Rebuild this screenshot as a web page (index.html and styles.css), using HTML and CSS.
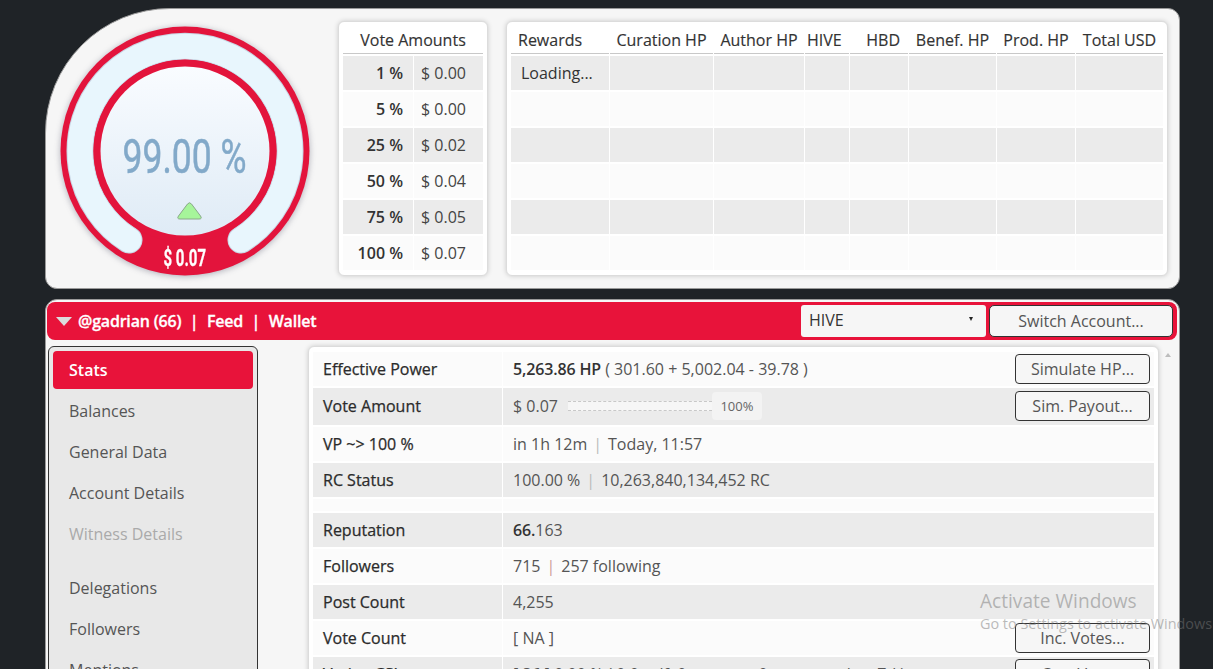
FILE: index.html
```html
<!DOCTYPE html>
<html lang="en">
<head>
<meta charset="utf-8">
<title>Hive Stats</title>
<link rel="stylesheet" href="styles.css">
</head>
<body>
<main class="page">
  <section class="top-panel">
    <svg class="gauge" width="250" height="250" viewBox="0 0 250 250" role="img" aria-label="Voting power gauge">
      <defs>
        <linearGradient id="disk" x1="0" y1="0" x2="0" y2="1">
          <stop offset="0" stop-color="#f9fcff"/>
          <stop offset="1" stop-color="#dfebf6"/>
        </linearGradient>
      </defs>
      <circle class="g-red" cx="125" cy="125" r="124.5"/>
      <path class="g-band-shade" d="M69 214 A105 105 0 1 1 181 214"/>
      <path class="g-band" d="M69 214 A105 105 0 1 1 181 214"/>
      <circle class="g-red" cx="125" cy="125" r="91.5"/>
      <circle class="g-disk" cx="125" cy="125" r="84.5" fill="url(#disk)"/>
      <text class="g-pct" x="62.5" y="147" textLength="124" lengthAdjust="spacingAndGlyphs">99.00 %</text>
      <path class="g-tri" d="M127.5 178 Q129.5 175.5 131.5 178 L140.5 190 Q142.5 193 139 193 L120 193 Q116.5 193 118.5 190 Z"/>
      <text class="g-usd" x="103.5" y="239.5" textLength="42.5" lengthAdjust="spacingAndGlyphs">$ 0.07</text>
    </svg>

    <div class="card vote-card">
      <div class="th vote-head">Vote Amounts</div>
      <div class="td odd strong num">1 %</div><div class="td odd val">$ 0.00</div>
      <div class="td strong num">5 %</div><div class="td val">$ 0.00</div>
      <div class="td odd strong num">25 %</div><div class="td odd val">$ 0.02</div>
      <div class="td strong num">50 %</div><div class="td val">$ 0.04</div>
      <div class="td odd strong num">75 %</div><div class="td odd val">$ 0.05</div>
      <div class="td strong num">100 %</div><div class="td val">$ 0.07</div>
    </div>

    <div class="card rewards-card">
      <div class="th th-first">Rewards</div>
      <div class="th">Curation HP</div>
      <div class="th">Author HP</div>
      <div class="th th-hive">HIVE</div>
      <div class="th th-hbd">HBD</div>
      <div class="th">Benef. HP</div>
      <div class="th">Prod. HP</div>
      <div class="th">Total USD</div>

      <div class="td odd loading">Loading...</div><div class="td odd"></div><div class="td odd"></div><div class="td odd"></div><div class="td odd"></div><div class="td odd"></div><div class="td odd"></div><div class="td odd"></div>
      <div class="td"></div><div class="td"></div><div class="td"></div><div class="td"></div><div class="td"></div><div class="td"></div><div class="td"></div><div class="td"></div>
      <div class="td odd"></div><div class="td odd"></div><div class="td odd"></div><div class="td odd"></div><div class="td odd"></div><div class="td odd"></div><div class="td odd"></div><div class="td odd"></div>
      <div class="td"></div><div class="td"></div><div class="td"></div><div class="td"></div><div class="td"></div><div class="td"></div><div class="td"></div><div class="td"></div>
      <div class="td odd"></div><div class="td odd"></div><div class="td odd"></div><div class="td odd"></div><div class="td odd"></div><div class="td odd"></div><div class="td odd"></div><div class="td odd"></div>
      <div class="td"></div><div class="td"></div><div class="td"></div><div class="td"></div><div class="td"></div><div class="td"></div><div class="td"></div><div class="td"></div>
    </div>
  </section>

  <section class="main-panel">
    <header class="bar">
      <span class="bar-arrow"></span>
      <nav class="bar-links">
        <span>@gadrian (66)</span><span class="sep">|</span><span>Feed</span><span class="sep">|</span><span>Wallet</span>
      </nav>
      <div class="select">HIVE<span class="select-arrow"></span></div>
      <button class="btn btn-switch">Switch Account...</button>
    </header>

    <div class="content">
      <aside class="sidebar">
        <div class="side-item active">Stats</div>
        <div class="side-item">Balances</div>
        <div class="side-item">General Data</div>
        <div class="side-item">Account Details</div>
        <div class="side-item disabled">Witness Details</div>
        <div class="side-item group">Delegations</div>
        <div class="side-item">Followers</div>
        <div class="side-item">Mentions</div>
      </aside>

      <div class="details card">
        <div class="label">Effective Power</div>
        <div class="value"><b>5,263.86 HP</b>&nbsp;( 301.60 + 5,002.04 - 39.78 )<button class="btn btn-row">Simulate HP...</button></div>

        <div class="label odd tall">Vote Amount</div>
        <div class="value odd tall">$ 0.07<span class="meter"></span><span class="meter-label">100%</span><button class="btn btn-row">Sim. Payout...</button></div>

        <div class="label">VP ~&gt; 100 %</div>
        <div class="value">in 1h 12m<span class="pipe">|</span>Today, 11:57</div>

        <div class="label odd">RC Status</div>
        <div class="value odd">100.00 %<span class="pipe">|</span>10,263,840,134,452 RC</div>

        <div class="spacer"></div>
        <div class="spacer"></div>

        <div class="label odd">Reputation</div>
        <div class="value odd"><b>66.</b>163</div>

        <div class="label">Followers</div>
        <div class="value">715<span class="pipe red">|</span>257 following</div>

        <div class="label odd">Post Count</div>
        <div class="value odd">4,255</div>

        <div class="label">Vote Count</div>
        <div class="value">[ NA ]<button class="btn btn-row">Inc. Votes...</button></div>

        <div class="label odd">Voting CSI</div>
        <div class="value odd">[ 36 ] 0.00 % ( 0.0 self, 0 upvotes, 0 accounts, last 7d )<button class="btn btn-row">Cast Vote...</button></div>
      </div>

      <div class="scrollbar"><span class="scroll-up"></span></div>
    </div>
  </section>
</main>

<div class="activate">
  <div class="activate-title">Activate Windows</div>
  <div class="activate-sub">Go to Settings to activate Windows</div>
</div>
</body>
</html>
```

FILE: styles.css
```css
html, body {
  margin: 0;
  height: 669px;
  overflow: hidden;
  background: #1f2327;
}

body {
  font-family: "Open Sans", "Liberation Sans", sans-serif;
  font-size: 16px;
  color: #444;
  position: relative;
}

.page {
  width: 1135px;
  margin-left: 45px;
  padding-top: 8px;
}

/* Top panel */
.top-panel {
  height: 281px;
  box-sizing: border-box;
  display: flex;
  align-items: flex-start;
  padding: 12px 0 0 14px;
  background: #f6f6f6;
  border: 1px solid #9a9a9a;
  border-radius: 125px 12px 12px 12px;
  margin-bottom: 10px;
}

.gauge {
  flex: none;
  margin: 5px 28px 0 0;
  overflow: visible;
  filter: drop-shadow(0 1px 3px rgba(40, 40, 70, .35));
}

.g-red { fill: #e3143c; }
.g-band { fill: none; stroke: #e8f6fd; stroke-width: 25; stroke-linecap: round; }
.g-band-shade { fill: none; stroke: #c9d6e4; stroke-width: 27; stroke-linecap: round; }
.g-pct {
  font-family: Roboto, "Liberation Sans", sans-serif;
  font-size: 49px;
  font-weight: 400;
  fill: #82a9c9;
  stroke: #82a9c9;
  stroke-width: .5;
}
.g-usd {
  font-family: Roboto, "Liberation Sans", sans-serif;
  font-size: 24px;
  font-weight: 700;
  fill: #fff;
  stroke: #fff;
  stroke-width: .3;
}
.g-tri {
  fill: #a6f59a;
  stroke: #8aa889;
  stroke-width: 1;
  stroke-linejoin: round;
}

.card {
  box-sizing: border-box;
  background: #fff;
  border: 1px solid #dcdcdc;
  border-radius: 6px;
  box-shadow: 0 0 5px rgba(0, 0, 0, .18);
}

.vote-card,
.rewards-card {
  flex: none;
  height: 255px;
  padding: 5px 4px;
  display: grid;
  row-gap: 2px;
  column-gap: 1px;
  grid-auto-rows: 34px;
  grid-template-rows: 27px;
  color: #333;
}

.vote-card {
  width: 150px;
  grid-template-columns: 70px 69px;
}

.rewards-card {
  width: 662px;
  margin-left: 18px;
  grid-template-columns: 98px 103px 90px 44px 58px 87px 78px 87px;
}

.th {
  box-sizing: border-box;
  border-bottom: 1px solid #c8c8c8;
  text-align: center;
  color: #333;
  line-height: 26px;
  white-space: nowrap;
  -webkit-text-stroke: .15px #333;
}

.vote-head { grid-column: 1 / span 2; }
.th-first { text-align: left; padding-left: 7px; }
.th-hive { text-align: left; padding-left: 2px; }
.th-hbd { text-align: right; padding-right: 8px; }

.td {
  background: #fbfbfb;
  line-height: 34px;
  white-space: nowrap;
}

.odd { background: #ebebeb; }
.strong { font-weight: 600; color: #333; }
.num { text-align: right; padding-right: 10px; }
.val { padding-left: 7px; color: #444; }
.loading { padding-left: 10px; color: #333; }

/* Main panel */
.main-panel {
  box-sizing: border-box;
  height: 500px;
  padding: 2px 2px 0 1px;
  background: #f6f6f6;
  border: 1px solid #9a9a9a;
  border-radius: 12px;
}

.bar {
  height: 38px;
  box-sizing: border-box;
  display: flex;
  align-items: flex-start;
  padding: 3px 4px 0 9px;
  background: #e8133a;
  border-radius: 8px;
  color: #fff;
  margin-bottom: 6px;
}

.bar-arrow {
  flex: none;
  width: 0;
  height: 0;
  margin: 12px 6px 0 0;
  border-style: solid;
  border-width: 9px 8px 0;
  border-color: #dcdcdc transparent transparent;
}

.bar-links {
  flex: 1;
  display: flex;
  line-height: 32px;
  font-weight: 600;
  letter-spacing: -.2px;
  -webkit-text-stroke: .3px #fff;
  white-space: nowrap;
}

.sep { margin: 0 8.5px; }

.select {
  flex: none;
  position: relative;
  box-sizing: border-box;
  width: 185px;
  height: 32px;
  margin-right: 3px;
  padding-left: 8px;
  background: #f6f6f6;
  border-radius: 3px;
  color: #333;
  line-height: 30px;
}

.select-arrow {
  position: absolute;
  right: 13px;
  top: 12px;
  width: 0;
  height: 0;
  border-style: solid;
  border-width: 4px 2.5px 0;
  border-color: #222 transparent transparent;
}

.btn {
  box-sizing: border-box;
  font-family: inherit;
  font-size: 16px;
  color: #555;
  background: #f6f6f6;
  border: 1px solid #333;
  border-radius: 4px;
  padding: 0;
  white-space: nowrap;
}

.btn-switch {
  flex: none;
  width: 184px;
  height: 32px;
  border-radius: 5px;
}

.content {
  display: flex;
  align-items: flex-start;
  padding-left: 1px;
}

.sidebar {
  flex: none;
  box-sizing: border-box;
  width: 210px;
  height: 340px;
  padding: 4px;
  margin-right: 50px;
  background: #e8e8e8;
  border: 1px solid #333;
  border-radius: 6px;
  display: flex;
  flex-direction: column;
  gap: 3px;
}

.side-item {
  flex: none;
  height: 38px;
  padding-left: 16px;
  line-height: 38px;
  color: #555;
  border-radius: 4px;
}

.side-item.active { background: #e8133a; color: #fff; font-weight: 600; }
.side-item.disabled { color: #aaa; }
.side-item.group { margin-top: 13px; }

.details {
  flex: none;
  width: 851px;
  height: 340px;
  padding: 5px 4px 0;
  display: grid;
  grid-template-columns: 189px 651px;
  column-gap: 1px;
  row-gap: 2px;
  grid-auto-rows: min-content;
  color: #333;
}

.label,
.value {
  box-sizing: border-box;
  height: 34px;
  display: flex;
  align-items: center;
  background: #fbfbfb;
  white-space: nowrap;
}

.label {
  padding-left: 10px;
  font-weight: 500;
  color: #2b2b2b;
  -webkit-text-stroke: .25px #2b2b2b;
}
.value { padding: 0 4px 0 10px; color: #555; }
.value b { font-weight: 600; color: #333; letter-spacing: -.15px; }
.label.odd, .value.odd { background: #ebebeb; }
.tall { height: 37px; padding-bottom: 1px; }
.spacer { height: 12px; background: #fbfbfb; }

.pipe { margin: 0 6px; color: #bbb; }
.pipe.red { color: #c99; }

.meter {
  box-sizing: border-box;
  width: 144px;
  height: 10px;
  margin-left: 10px;
  background: #f6f6f6;
  border-top: 1px dashed #c8c8c8;
  border-bottom: 1px dashed #c8c8c8;
}

.meter-label {
  box-sizing: border-box;
  width: 50px;
  height: 28px;
  background: #f3f3f3;
  border-radius: 4px;
  font-size: 13px;
  line-height: 28px;
  text-align: center;
  color: #666;
}

.btn-row {
  flex: none;
  width: 135px;
  height: 30px;
  margin-left: auto;
}

.scrollbar {
  flex: none;
  width: 18px;
  height: 340px;
  display: flex;
  justify-content: center;
  padding-top: 7px;
  box-sizing: border-box;
}

.scroll-up {
  width: 0;
  height: 0;
  border-style: solid;
  border-width: 0 3.5px 4px;
  border-color: transparent transparent #bdbdbd;
}

/* OS watermark */
.activate {
  position: absolute;
  left: 980px;
  top: 588px;
  white-space: nowrap;
  color: rgba(120, 120, 120, .5);
  pointer-events: none;
}

.activate-title { font-size: 19.1px; line-height: 26px; }
.activate-sub { font-size: 14.4px; line-height: 20px; }
```
